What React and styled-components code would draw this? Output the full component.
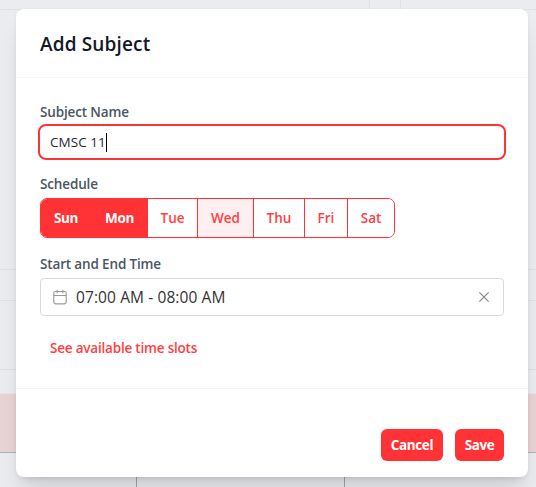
import React from "react";
import styled, { createGlobalStyle } from "styled-components";

const Global = createGlobalStyle`
  *, *::before, *::after { box-sizing: border-box; }
  body { margin: 0; overflow: hidden; font-family: "Open Sans", "Noto Sans", sans-serif; font-size: 14px; }
  button, input { font: inherit; margin: 0; }
`;

const Page = styled.div`
  position: relative;
  width: 536px;
  height: 487px;
  overflow: hidden;
  background: #ebecf0;
`;

const Calendar = styled.div`
  display: flex;
  flex-direction: column;
  height: 100%;
`;

const CalendarRow = styled.div`
  display: flex;
  flex: 0 0 ${(p) => p.$h}px;
  background: ${(p) => (p.$event ? "#e8d3d5" : "transparent")};
  border-bottom: 1px solid ${(p) => p.$line || "#e0e1e5"};
`;

const CalendarCell = styled.div`
  flex: 0 0 ${(p) => p.$w}px;
  border-right: 1px solid ${(p) => p.$line || "#e0e1e5"};
`;

const Dialog = styled.section`
  position: absolute;
  top: 9px;
  left: 16px;
  width: 512px;
  height: 468px;
  display: flex;
  flex-direction: column;
  background: #fff;
  border-radius: 8px;
  box-shadow: 0 20px 25px -5px rgba(0, 0, 0, 0.1), 0 8px 10px -6px rgba(0, 0, 0, 0.1),
    0 1px 4px rgba(0, 0, 0, 0.06);
`;

const Header = styled.header`
  height: 69px;
  padding: 2px 24px 0;
  display: flex;
  align-items: center;
  border-bottom: 1px solid #f3f4f6;
`;

const Title = styled.h2`
  margin: 0;
  font-size: 19px;
  line-height: 28px;
  font-weight: 600;
  letter-spacing: 0.15px;
  color: #111827;
`;

const Body = styled.div`
  flex: 1;
  padding: 24px;
  display: flex;
  flex-direction: column;
  align-items: stretch;
`;

const Field = styled.div`
  display: flex;
  flex-direction: column;
  margin-bottom: ${(p) => p.$gap}px;
`;

const Label = styled.label`
  height: 20px;
  line-height: 20px;
  margin-bottom: ${(p) => p.$gap}px;
  font-size: 13.5px;
  font-weight: 600;
  letter-spacing: -0.15px;
  color: #4b5563;
`;

const TextBox = styled.div`
  height: 36px;
  margin: 0 -2px;
  padding: 0 10px;
  display: flex;
  align-items: center;
  border: 2px solid #ff3236;
  border-radius: 8px;
  color: #1f2937;
  font-size: 13.5px;
  letter-spacing: 0.05px;
  white-space: pre;
`;

const Caret = styled.span`
  width: 1px;
  height: 19px;
  background: #000;
`;

const DayGroup = styled.div`
  display: flex;
  width: 355px;
  height: 40px;
  border: 1px solid #ff3236;
  border-radius: 7px;
  overflow: hidden;
  box-shadow: 0 1px 2px rgba(0, 0, 0, 0.05);
`;

const Day = styled.button`
  flex: 0 0 ${(p) => p.$w}px;
  padding: 0;
  border: 0;
  border-right: ${(p) => (p.$last ? "0" : "1px solid #ff3236")};
  background: ${(p) => (p.$on ? "#ff3236" : p.$hover ? "#ffeff0" : "#fff")};
  color: ${(p) => (p.$on ? "#fff" : "#ff3f43")};
  font-size: 13.5px;
  font-weight: ${(p) => (p.$on ? 700 : 600)};
  letter-spacing: ${(p) => p.$track || 0}px;
`;

const TimeBox = styled.div`
  height: 38px;
  padding: 0 11px;
  display: flex;
  align-items: center;
  border: 1px solid #d9d9d9;
  border-radius: 4px;
`;

const TimeText = styled.span`
  flex: 1;
  margin-left: 8px;
  font-size: 15.5px;
  letter-spacing: 0.1px;
  color: #333;
`;

const SlotLink = styled.a`
  margin-left: 10px;
  height: 20px;
  line-height: 20px;
  font-size: 13.5px;
  font-weight: 600;
  letter-spacing: -0.2px;
  color: #ff3f43;
`;

const Footer = styled.footer`
  height: 89px;
  padding: 0 24px 16px;
  display: flex;
  justify-content: flex-end;
  align-items: flex-end;
  gap: 12px;
  border-top: 1px solid #f3f4f6;
`;

const Action = styled.button`
  width: ${(p) => p.$w}px;
  height: 32px;
  padding: 0;
  border: 0;
  border-radius: 6px;
  background: #ff3236;
  color: #fff;
  font-size: 13.5px;
  font-weight: 700;
  letter-spacing: -0.4px;
`;

const CalendarIcon = () => (
  <svg width="16" height="16" viewBox="0 0 16 16" fill="none" stroke="#999" strokeWidth="1.1">
    <rect x="1.8" y="2.5" width="12.4" height="12.4" rx="1.8" />
    <path d="M1.8 6.5H14.2M5.2 0.7V4.3M10.8 0.7V4.3" />
  </svg>
);

const ClearIcon = () => (
  <svg width="16" height="16" viewBox="0 0 16 16" fill="none" stroke="#858585" strokeWidth="1.15">
    <path d="M3.4 3.4L12.6 12.6M12.6 3.4L3.4 12.6" />
  </svg>
);

const days = [
  { name: "Sun", w: 51, on: true, track: -0.4 },
  { name: "Mon", w: 56, on: true, track: -0.4 },
  { name: "Tue", w: 50 },
  { name: "Wed", w: 56, hover: true },
  { name: "Thu", w: 51 },
  { name: "Fri", w: 43 },
  { name: "Sat", w: 46 },
];

export default function App() {
  return (
    <>
      <Global />
      <Page>
        <Calendar>
          <CalendarRow $h={10}>
            <CalendarCell $w={370} />
            <CalendarCell $w={31} />
          </CalendarRow>
          <CalendarRow $h={260} />
          <CalendarRow $h={31} />
          <CalendarRow $h={69} />
          <CalendarRow $h={24} $line="#e6e5e8" />
          <CalendarRow $h={59} $event $line="#b0b2b9" />
          <CalendarRow $h={35}>
            <CalendarCell $w={137} $line="#a5a7ae" />
            <CalendarCell $w={208} $line="#a5a7ae" />
          </CalendarRow>
        </Calendar>
        <Dialog>
          <Header>
            <Title>Add Subject</Title>
          </Header>
          <Body>
            <Field $gap={14}>
              <Label $gap={2}>Subject Name</Label>
              <TextBox>CMSC 11<Caret /></TextBox>
            </Field>
            <Field $gap={16}>
              <Label $gap={4}>Schedule</Label>
              <DayGroup>
                {days.map((d, i) => (
                  <Day key={d.name} $w={d.w} $on={d.on} $hover={d.hover} $track={d.track} $last={i === days.length - 1}>
                    {d.name}
                  </Day>
                ))}
              </DayGroup>
            </Field>
            <Field $gap={22}>
              <Label $gap={4}>Start and End Time</Label>
              <TimeBox>
                <CalendarIcon />
                <TimeText>07:00 AM - 08:00 AM</TimeText>
                <ClearIcon />
              </TimeBox>
            </Field>
            <SlotLink>See available time slots</SlotLink>
          </Body>
          <Footer>
            <Action $w={62}>Cancel</Action>
            <Action $w={49}>Save</Action>
          </Footer>
        </Dialog>
      </Page>
    </>
  );
}
